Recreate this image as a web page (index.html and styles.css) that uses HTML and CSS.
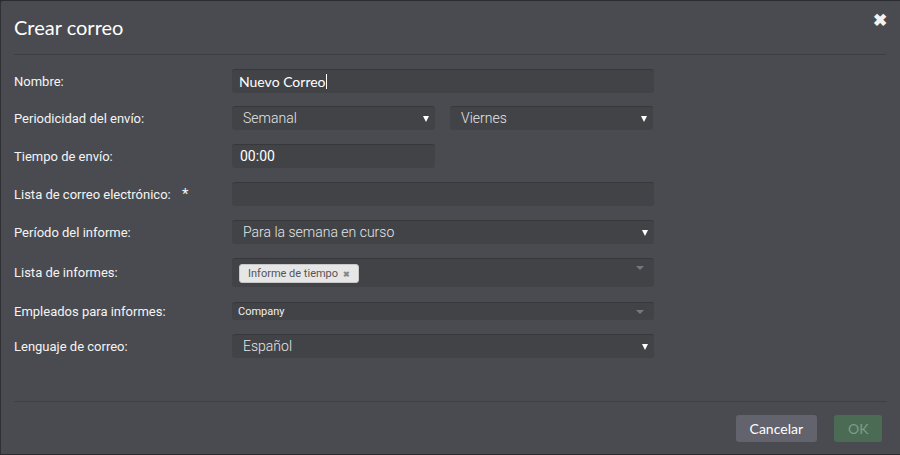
FILE: index.html
```html
<!DOCTYPE html>
<html lang="es">
<head>
    <meta charset="UTF-8">
    <meta name="viewport" content="width=device-width, initial-scale=1.0">
    <title>Crear correo</title>
    <link rel="stylesheet" href="styles.css">
</head>
<body>
    <div class="dialog">
        <div class="dialog-header">
            <h1>Crear correo</h1>
            <span class="close">&#10006;</span>
        </div>

        <div class="form">
            <div class="row">
                <label>Nombre:</label>
                <div class="field wide">Nuevo Correo<span class="caret"></span></div>
            </div>
            <div class="row">
                <label>Periodicidad del envío:</label>
                <div class="pair">
                    <div class="field select half">Semanal</div>
                    <div class="field select half">Viernes</div>
                </div>
            </div>
            <div class="row">
                <label>Tiempo de envío:</label>
                <div class="field half time">00:00</div>
            </div>
            <div class="row">
                <label>Lista de correo electrónico: <span class="req">*</span></label>
                <div class="field wide"></div>
            </div>
            <div class="row">
                <label>Período del informe:</label>
                <div class="field select wide">Para la semana en curso</div>
            </div>
            <div class="row row-tall">
                <label>Lista de informes:</label>
                <div class="field chosen tall wide">
                    <span class="tag">Informe de tiempo <b>&#10006;</b></span>
                </div>
            </div>
            <div class="row">
                <label>Empleados para informes:</label>
                <div class="field chosen small wide">Company</div>
            </div>
            <div class="row">
                <label>Lenguaje de correo:</label>
                <div class="field select wide">Español</div>
            </div>
        </div>

        <div class="dialog-footer">
            <button class="btn cancel">Cancelar</button>
            <button class="btn ok">OK</button>
        </div>
    </div>
</body>
</html>
```

FILE: styles.css
```css
body {
    margin: 0;
    background-color: #2b2c30;
    font-family: Roboto, sans-serif;
    color: #fff;
}

.dialog {
    width: 900px;
    height: 454px;
    background-color: #4a4b50;
    border-top: 1px solid #2b2c30;
    border-left: 1px solid #2f3034;
    box-sizing: border-box;
    border-top-left-radius: 3px;
    display: flex;
    flex-direction: column;
}

.dialog-header {
    height: 53px;
    margin: 0 14px 0 13px;
    border-bottom: 1px solid #3d3e42;
    position: relative;
}

h1 {
    margin: 0;
    padding-top: 14px;
    font-family: Lato, sans-serif;
    font-weight: 400;
    font-size: 20px;
    line-height: 24px;
    color: #fff;
}

.close {
    position: absolute;
    right: -1px;
    top: 9px;
    font-size: 17px;
    font-weight: bold;
    color: #f2f2f2;
}

.form {
    padding: 14px 0 0 13px;
    flex: 1;
}

.row {
    display: flex;
    align-items: center;
    margin-bottom: 14px;
}

.row:first-child {
    margin-bottom: 13px;
}

.row-tall {
    margin-bottom: 15px;
}

.row label {
    width: 218px;
    font-size: 13px;
    color: #f4f4f4;
}

.req {
    margin-left: 8px;
    font-size: 15px;
}

.field {
    position: relative;
    height: 24px;
    box-sizing: border-box;
    background-color: #424347;
    border-top: 1px solid #37383c;
    border-radius: 3px;
    padding: 0 7px;
    font-family: Lato, sans-serif;
    font-size: 14px;
    line-height: 23px;
    color: #fff;
}

.wide {
    width: 422px;
}

.half {
    width: 203px;
}

.pair {
    display: flex;
    gap: 15px;
}

.time {
    font-family: Roboto, sans-serif;
    padding-left: 8px;
}

.caret {
    display: inline-block;
    width: 1px;
    height: 15px;
    background-color: #fff;
    vertical-align: -2px;
}

.select {
    font-family: Roboto, sans-serif;
    font-weight: 300;
    padding-left: 11px;
    color: #e6e6e6;
}

.select::after {
    content: "";
    position: absolute;
    right: 6px;
    top: 9px;
    border-left: 3.5px solid transparent;
    border-right: 3.5px solid transparent;
    border-top: 6px solid #fff;
}

.chosen::after {
    content: "";
    position: absolute;
    right: 10px;
    top: 7px;
    border-left: 4px solid transparent;
    border-right: 4px solid transparent;
    border-top: 4px solid #77787d;
}

.tall {
    height: 29px;
    padding: 5px 7px 0;
    display: flex;
    align-items: flex-start;
}

.small {
    height: 18px;
    padding-left: 6px;
    font-family: Roboto, sans-serif;
    font-size: 11px;
    line-height: 17px;
    color: #f0f0f0;
}

.small::after {
    top: 7px;
}

.tag {
    display: inline-block;
    height: 19px;
    box-sizing: border-box;
    padding: 0 8px;
    background-color: #e6e6e6;
    border: 1px solid #c8c8c8;
    border-radius: 3px;
    font-family: Roboto, sans-serif;
    font-size: 11px;
    line-height: 17px;
    color: #555;
}

.tag b {
    font-size: 8px;
    color: #888;
    margin-left: 2px;
}

.dialog-footer {
    margin: 0 13px;
    border-top: 1px solid #3f4044;
    height: 53px;
    display: flex;
    justify-content: flex-end;
    align-items: flex-start;
    padding-top: 13px;
    box-sizing: border-box;
    gap: 17px;
}

.btn {
    height: 27px;
    border: none;
    border-radius: 3px;
    font-family: Lato, sans-serif;
    font-size: 14px;
    padding: 0 14px;
}

.cancel {
    background-color: #62636d;
    color: #fff;
}

.ok {
    background-color: #4c6b55;
    color: #7f9c86;
    width: 48px;
    margin-right: 5px;
}
```
